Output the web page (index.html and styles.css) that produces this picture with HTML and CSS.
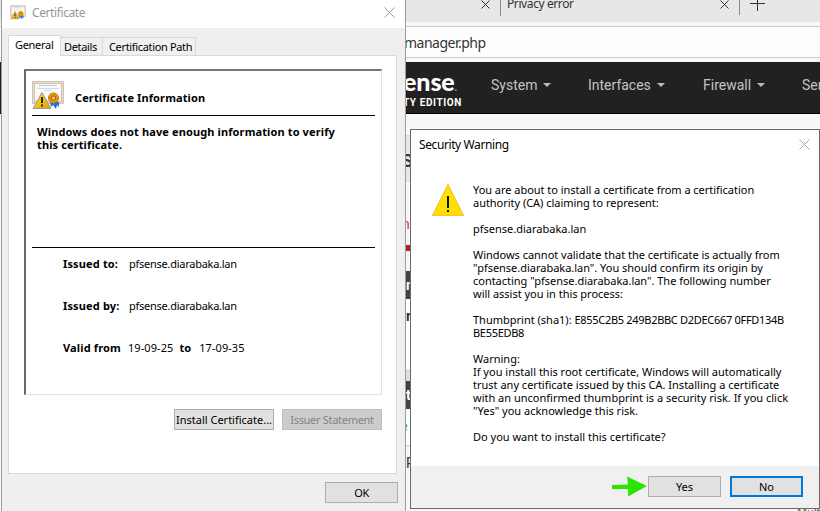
FILE: index.html
```html
<!DOCTYPE html>
<html lang="en">
<head>
<meta charset="utf-8">
<title>Certificate</title>
<link rel="stylesheet" href="styles.css">
</head>
<body>
<div class="desktop">
  <div class="browser">
    <div class="tabstrip">
      <svg class="tab-close" width="9" height="9" viewBox="0 0 9 9"><path d="M.5.5l8 8M8.500.5l-8 8"/></svg>
      <span class="divider"></span>
      <span class="tab-title">Privacy error</span>
      <svg class="tab-close" width="9" height="9" viewBox="0 0 9 9"><path d="M.5.5l8 8M8.500.5l-8 8"/></svg>
      <span class="divider"></span>
      <svg class="tab-new" width="15" height="15" viewBox="0 0 15 15"><path d="M0 7.500h15M7.500 0v15"/></svg>
    </div>
    <div class="address">manager.php</div>
    <nav class="navbar">
      <div class="brand"><b>ense<i>.</i></b><small>TY EDITION</small></div>
      <span class="menu system">System</span>
      <span class="menu interfaces">Interfaces</span>
      <span class="menu firewall">Firewall</span>
      <span class="menu services">Services</span>
    </nav>
    <main class="page">
      <div class="crumb">S</div>
      <div class="alert">ne</div>
      <div class="redline"></div>
      <div class="head first">n</div>
      <div class="cell tall"><b>r</b></div>
      <div class="head">t</div>
      <div class="cell link">e</div>
      <div class="cell last">P</div>
    </main>
    <span class="language">Multi</span>
  </div>

  <section class="window certificate">
    <header class="titlebar">
      <svg class="small-icon" width="16" height="15" viewBox="0 0 32 29"><use href="#cert"/></svg>
      <span class="title">Certificate</span>
      <svg class="close" width="11" height="11" viewBox="0 0 11 11"><path d="M.5.5l10 10M10.500.5l-10 10"/></svg>
    </header>
    <div class="tabs">
      <span class="tab active">General</span>
      <span class="tab">Details</span>
      <span class="tab">Certification Path</span>
    </div>
    <div class="panel">
      <div class="info">
        <div class="info-head">
          <svg width="32" height="29" viewBox="0 0 32 29">
            <defs>
              <linearGradient id="gold" x2="1" y2="1"><stop stop-color="#ffe640"/><stop offset="1" stop-color="#e59900"/></linearGradient>
              <g id="cert">
                <rect width="32" height="23" rx="1" fill="#cfc2b3"/>
                <path fill="none" stroke="#e8ddd0" d="M1.500 1.500h29v20h-29z"/>
                <path fill="#fafafa" d="M3 3h26v17H3z"/>
                <path fill="none" stroke="#b3b6cc" d="M7 4.500h18" stroke-dasharray="2 .6"/>
                <path fill="none" stroke="#d3d8ea" d="M5 7.500h22M12 9.500h8"/>
                <path fill="#226ed5" d="M18 20l1 6 2-2 3 4 1-4 2 2v-5z"/>
                <circle cx="21.500" cy="17" r="5" fill="#e39a10" stroke="#c97c08"/>
                <circle cx="21.500" cy="17" r="2.200" fill="#f8c451" stroke="#a75b05"/>
                <path fill="url(#gold)" stroke="#98989c" stroke-linejoin="round" d="M10 11.500L1 27.500h18z"/>
                <path stroke="#352700" stroke-width="2" d="M10 16v6M10 23.500v2"/>
              </g>
            </defs>
            <use href="#cert"/>
          </svg>
          <b>Certificate Information</b>
        </div>
        <div class="message"><b>Windows does not have enough information to verify</b><b>this certificate.</b></div>
        <div class="details">
          <div><b>Issued to:</b><span class="host">pfsense.diarabaka.lan</span></div>
          <div><b>Issued by:</b><span class="host">pfsense.diarabaka.lan</span></div>
          <div class="valid"><b>Valid from</b><span>19-09-25</span><b class="to">to</b><span>17-09-35</span></div>
        </div>
      </div>
      <div class="actions"><button>Install Certificate...</button><button disabled>Issuer Statement</button></div>
    </div>
    <footer class="ok-row"><button>OK</button></footer>
  </section>

  <section class="window warning">
    <header class="warn-title"><span>Security Warning</span>
      <svg class="close" width="11" height="11" viewBox="0 0 11 11"><path d="M.5.5l10 10M10.500.5l-10 10"/></svg>
    </header>
    <div class="warn-body">
      <svg width="32" height="32" viewBox="0 0 32 32"><path d="M16 .8L31.300 31.300H.7z" fill="#ffe100" stroke="#ffc22c" stroke-width="1.300"/><path d="M15 12h2v12h-2zM15 26h2v2h-2z" fill="#111"/></svg>
      <div class="copy">
        <p class="narrow">You are about to install a certificate from a certification<br>authority (CA) claiming to represent:</p>
        <p>pfsense.diarabaka.lan</p>
        <p class="wide">Windows cannot validate that the certificate is actually from<br>"pfsense.diarabaka.lan". You should confirm its origin by<br>contacting "pfsense.diarabaka.lan". The following number<br>will assist you in this process:</p>
        <p>Thumbprint (sha1): <span class="hash">E855C2B5 249B2BBC D2DEC667 0FFD134B<br>BE55EDB8</span></p>
        <p>Warning:<br>If you install this root certificate, Windows will automatically<br>trust any certificate issued by this CA. Installing a certificate<br>with an unconfirmed thumbprint is a security risk. If you click<br>"Yes" you acknowledge this risk.</p>
        <p>Do you want to install this certificate?</p>
      </div>
    </div>
    <footer class="warn-actions">
      <svg width="36" height="21" viewBox="0 0 36 21"><path fill="#2be500" d="M0 9l16-.6L15 .5 35 10 16 20.500l.2-7.500L0 13z"/></svg>
      <button>Yes</button><button class="default">No</button>
    </footer>
  </section>
</div>
</body>
</html>
```

FILE: styles.css
```css
* { box-sizing: border-box; }
body { margin: 0; font: 11px/13px "Noto Sans", "Open Sans", sans-serif; color: #000; }
svg { display: block; flex: none; }
p { margin: 0 0 13px; }
.desktop { position: relative; width: 820px; height: 511px; overflow: hidden; background: #f8f8f8; }

.browser { width: 820px; height: 511px; color: #333; }
.tabstrip { display: flex; align-items: flex-start; height: 22px; padding-left: 481px; background: #e7e7e7; }
.tab-close { fill: none; stroke: #333; }
.divider { width: 1px; height: 16px; margin-left: 10px; background: #888; }
.tab-title { width: 213px; margin: -4px 0 0 6px; font: 12px/15px "Noto Sans", sans-serif; letter-spacing: -.4px; }
.divider ~ .divider { height: 15px; }
.tab-new { margin: -4px 0 0 10px; fill: none; stroke: #333; }
.address { height: 32px; margin-top: 4px; padding-left: 404px; border: solid #ccc; border-width: 1px 0; background: #fdfdfd; font: 14px/31px "Noto Sans", sans-serif; letter-spacing: -.5px; }
.navbar { display: flex; height: 52px; margin-top: 4px; padding-left: 403px; background: #212121; border-bottom: 1px solid #000; color: #c4c4c4; font: 14px/46px Roboto, sans-serif; }
.brand { flex: none; width: 88px; padding-top: 4px; color: #fff; white-space: nowrap; }
.brand b { display: block; height: 31px; font: 900 25px/30px Lato, sans-serif; letter-spacing: -.1px; }
.brand i { font-size: 11px; color: #888; }
.brand small { display: block; font: bold 10px/12px Roboto, sans-serif; letter-spacing: .6px; }
.menu { display: flex; flex: none; align-items: center; height: 46px; }
.menu::after { content: ""; margin-left: 6px; border: 4px solid transparent; border-top-color: #bbb; border-bottom: 0; }
.system { width: 97px; }
.interfaces { width: 115px; }
.firewall { width: 99px; }
.page { padding: 21px 0 0 402px; }
.crumb { height: 47px; background: #e8e8e8; border: solid #ddd; border-width: 1px 0; font: bold 18px/49px Roboto, sans-serif; }
.alert { height: 63px; font: 14px/84px Roboto, sans-serif; color: #c6422e; }
.redline { height: 6px; background: #b71c1c; }
.head { height: 28px; padding-left: 4px; background: #424242; color: #fff; font: bold 14px/28px Roboto, sans-serif; }
.head.first { margin-top: 20px; }
.cell { height: 38px; padding-left: 4px; border-bottom: 2px solid #ddd; background: #fff; font: 14px/35px Roboto, sans-serif; }
.cell.tall { height: 82px; border-bottom: 12px solid #dedede; }
.link { padding-left: 0; text-indent: -2px; color: #1976a5; }
.last { height: 90px; background: none; border: 0; line-height: 32px; }
.language { position: absolute; left: 797px; top: 505px; color: #555; }

.window { position: absolute; }
.certificate { left: 1px; top: 0; width: 405px; height: 520px; background: #efefef; border: solid #9b9b9b; border-width: 0 1px; }
.titlebar { display: flex; height: 28px; padding: 5px 10px 0 8px; background: #fff; color: #999; }
.title { flex: 1; margin-left: 6px; font-size: 12px; line-height: 15px; letter-spacing: -.4px; }
.close { fill: none; stroke: #999; margin-top: 2px; }
.tabs { display: flex; align-items: flex-end; height: 28px; padding-left: 6px; position: relative; }
.tab { height: 18px; width: 93px; margin-bottom: 1px; padding-left: 6px; border: 1px solid #d9d9d9; border-left: 0; border-bottom: 0; line-height: 18px; letter-spacing: -.34px; background: #f0f0f0; white-space: nowrap; }
.tab:nth-child(2) { width: 42px; padding-left: 3px; }
.tab.active { width: 53px; height: 21px; margin-bottom: 0; padding-left: 6px; letter-spacing: -.3px; border-left: 1px solid #d9d9d9; background: #fff; }
.panel { width: 389px; height: 419px; margin: -1px 0 0 6px; padding: 13px 14px 0 15px; border: 1px solid #d9d9d9; background: #fff; }
.info { width: 358px; height: 326px; padding: 10px 6px 0 6px; border: 2px solid #696969; border-right: 1px solid #e3e3e3; border-bottom: 1px solid #e3e3e3; border-top-color: #777; }
.info-head { display: flex; height: 35px; border-bottom: 1px solid #000; }
.info-head b { margin: 10px 0 0 11px; letter-spacing: .12px; }
.message { height: 132px; padding: 9px 0 0 5px; border-bottom: 1px solid #000; white-space: nowrap; letter-spacing: .12px; }
.message b { display: block; width: max-content; }
.details { padding: 9px 0 0 31px; }
.details div { display: flex; height: 42px; }
.details b:first-child { width: 66px; letter-spacing: .15px; }
.details .valid b:first-child { width: 65px; }
.host { letter-spacing: -.26px; }
.valid span { letter-spacing: .08px; }
.details .to { margin: 0 8px 0 6px; }
button { width: 73px; height: 21px; padding: 0 0 1px; border: 1px solid #adadad; background: #e1e1e1; font: inherit; color: #000; white-space: nowrap; }
.actions { display: flex; gap: 8px; margin: 14px 0 0 150px; }
.actions button { flex: none; width: 100px; }
.actions button:disabled { background: #ccc; border-color: #bfbfbf; color: #838383; letter-spacing: -.3px; }
.ok-row { display: flex; justify-content: flex-end; padding: 8px 7px 0 0; }
.ok-row button { letter-spacing: -.4px; }

.warning { left: 410px; top: 129px; width: 410px; height: 380px; border: 1px solid #696969; background: #fff; }
.warn-title { display: flex; justify-content: space-between; height: 54px; padding: 7px 9px 0 8px; font-size: 12px; line-height: 16px; letter-spacing: -.4px; }
.warn-title .close { stroke: #aaa; }
.warn-body { display: flex; height: 282px; padding-left: 21px; }
.copy { margin: -1px 0 0 9px; white-space: nowrap; }
.narrow { letter-spacing: -.03px; }
.wide { letter-spacing: -.02px; }
.hash { letter-spacing: -.3px; }
.warn-actions { display: flex; height: 42px; padding: 10px 16px 0 201px; background: #f0f0f0; }
.warn-actions button + button { margin-left: 9px; }
.warn-actions .default { border: 2px solid #0078d7; }
```
